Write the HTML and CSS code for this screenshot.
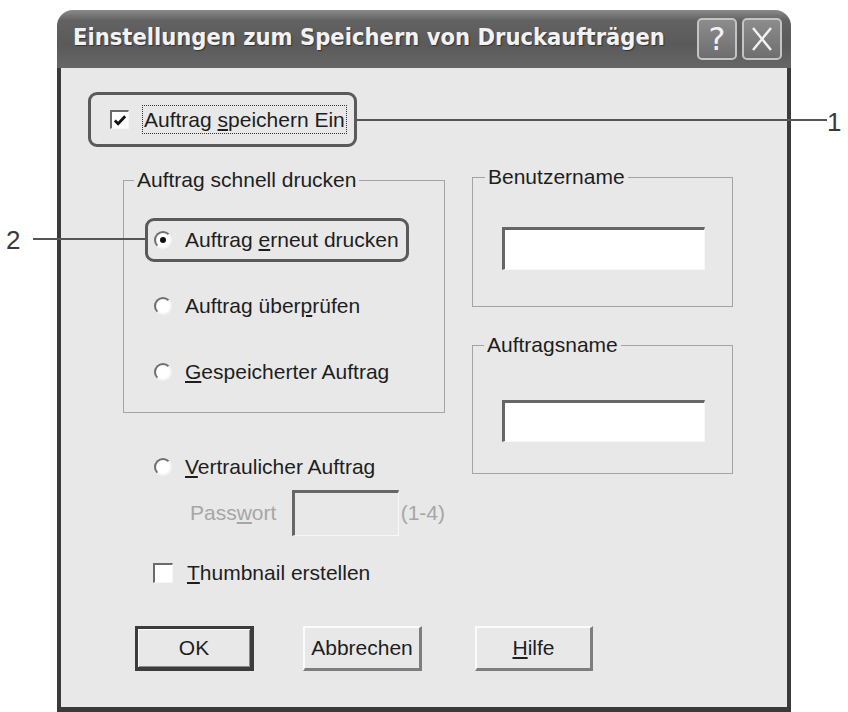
FILE: index.html
```html
<!DOCTYPE html>
<html lang="de">
<head>
<meta charset="utf-8">
<title>Einstellungen zum Speichern von Druckaufträgen</title>
<link rel="stylesheet" href="styles.css">
</head>
<body>
<div class="page">
  <div class="window">
    <div class="titlebar">
      <span class="title">Einstellungen zum Speichern von Druckaufträgen</span>
      <div class="tb-buttons">
        <span class="tb-btn tb-help">?</span>
        <span class="tb-btn tb-close"><svg width="30" height="30" viewBox="0 0 30 30"><path d="M6 4 L24 26 M24 4 L6 26" stroke="#f2f2f2" stroke-width="2.4" fill="none"/></svg></span>
      </div>
    </div>
    <div class="body">
      <div class="hl-check">
        <span class="checkbox"><svg width="17" height="17" viewBox="0 0 17 17"><path d="M3 8.5 L6.5 12 L14 4" stroke="#111" stroke-width="3" fill="none"/></svg></span>
        <span class="focus-label">Auftrag <u>s</u>peichern Ein</span>
      </div>
      <div class="main">
        <div class="col-left">
          <fieldset class="group group-quick">
            <legend>Auftrag schnell drucken</legend>
            <div class="opts">
              <div class="opt hl"><span class="radio checked"></span><span>Auftrag <u>e</u>rneut drucken</span></div>
              <div class="opt"><span class="radio"></span><span>Auftrag über<u>p</u>rüfen</span></div>
              <div class="opt"><span class="radio"></span><span><u>G</u>espeicherter Auftrag</span></div>
            </div>
          </fieldset>
          <div class="opt opt-conf"><span class="radio"></span><span><u>V</u>ertraulicher Auftrag</span></div>
          <div class="pw-row">
            <span class="disabled pw-label">Pass<u>w</u>ort</span>
            <span class="textbox pw-box"></span>
            <span class="disabled pw-range">(1-4)</span>
          </div>
          <div class="thumb-row">
            <span class="checkbox small"></span>
            <span><u>T</u>humbnail erstellen</span>
          </div>
        </div>
        <div class="col-right">
          <fieldset class="group group-user">
            <legend>Benutzername</legend>
            <div class="textbox user-box"></div>
          </fieldset>
          <fieldset class="group group-job">
            <legend>Auftragsname</legend>
            <div class="textbox job-box"></div>
          </fieldset>
        </div>
      </div>
      <div class="buttons">
        <span class="btn btn-default">OK</span>
        <span class="btn btn-cancel">Abbrechen</span>
        <span class="btn btn-help"><u>H</u>ilfe</span>
      </div>
    </div>
  </div>
  <div class="callout-line line1"></div>
  <span class="callout-num num1">1</span>
  <div class="callout-line line2"></div>
  <span class="callout-num num2">2</span>
</div>
</body>
</html>
```
FILE: styles.css
```css
html, body {
  margin: 0;
  padding: 0;
  background: #ffffff;
}

.page {
  position: relative;
  width: 848px;
  height: 712px;
  overflow: hidden;
  padding-top: 10px;
  box-sizing: border-box;
  font-family: "Liberation Sans", Arial, sans-serif;
  font-size: 21px;
  color: #1e1e1e;
}

.window {
  margin-left: 57px;
  width: 734px;
  height: 702px;
  display: flex;
  flex-direction: column;
}

.titlebar {
  height: 58px;
  flex: none;
  border-radius: 16px 16px 0 0;
  background: linear-gradient(#8a8a8a 0%, #626262 18%, #5a5a5a 60%, #666666 100%);
  display: flex;
  align-items: center;
  justify-content: space-between;
  padding: 0 9px 0 16px;
  box-sizing: border-box;
}

.title {
  font-family: "DejaVu Sans Condensed", "DejaVu Sans", sans-serif;
  font-stretch: condensed;
  font-weight: bold;
  font-size: 23.5px;
  color: #f2f2f2;
  text-shadow: 1px 1px 1px #333;
  padding-bottom: 4px;
  white-space: nowrap;
}

.tb-buttons {
  display: flex;
  gap: 5px;
}

.tb-btn {
  width: 40px;
  height: 42px;
  box-sizing: border-box;
  border: 2px solid #c4c4c4;
  border-radius: 5px;
  background: linear-gradient(#8c8c8c, #6e6e6e);
  display: flex;
  align-items: center;
  justify-content: center;
  color: #f2f2f2;
}

.tb-help {
  font-family: "DejaVu Sans", sans-serif;
  font-size: 32px;
  line-height: 1;
}

.body {
  flex: 1;
  background: #e8e8e8;
  border: 4px solid #3a3a3a;
  border-top: 0;
  border-bottom-width: 5px;
  padding-top: 24px;
}

.hl-check {
  margin-left: 27px;
  width: 269px;
  height: 55px;
  box-sizing: border-box;
  border: 3px solid #5a5a5a;
  border-radius: 9px;
  display: flex;
  align-items: center;
  padding-left: 19px;
  gap: 13px;
}

.checkbox {
  width: 19px;
  height: 19px;
  box-sizing: border-box;
  background: #ffffff;
  border-style: solid;
  border-width: 2px 1px 1px 2px;
  border-color: #6a6a6a #f6f6f6 #f6f6f6 #6a6a6a;
  display: flex;
  align-items: center;
  justify-content: center;
  flex: none;
}

.checkbox.small {
  width: 20px;
  height: 20px;
}

.focus-label {
  border: 1px dotted #333;
  padding: 1px 1px;
  line-height: 25px;
  white-space: nowrap;
}

.main {
  margin-top: 18px;
  margin-left: 62px;
  display: grid;
  grid-template-columns: 322px 261px;
  column-gap: 27px;
  align-items: start;
}

.col-left {
  padding-top: 3px;
  display: flex;
  flex-direction: column;
}

.group {
  margin: 0;
  padding: 0;
  border: 1px solid #a4a4a4;
  box-sizing: border-box;
  min-width: 0;
}

.group legend {
  padding: 0 3px;
  line-height: 24px;
  white-space: nowrap;
}

.group-quick {
  height: 245px;
}

.group-quick legend {
  margin-left: 10px;
}

.opts {
  margin-top: 26px;
  margin-left: 21px;
  display: flex;
  flex-direction: column;
  gap: 22px;
}

.opt {
  width: 264px;
  height: 44px;
  box-sizing: border-box;
  border: 3px solid transparent;
  border-radius: 9px;
  display: flex;
  align-items: center;
  padding-left: 6px;
  gap: 13px;
  white-space: nowrap;
}

.opt.hl {
  border-color: #5a5a5a;
}

.radio {
  width: 18px;
  height: 18px;
  box-sizing: border-box;
  border-radius: 50%;
  background: #ffffff;
  border: 2px solid;
  border-color: #6e6e6e #f4f4f4 #f4f4f4 #6e6e6e;
  display: flex;
  align-items: center;
  justify-content: center;
  flex: none;
}

.radio.checked::after {
  content: "";
  width: 6px;
  height: 6px;
  border-radius: 50%;
  background: #111;
}

.opt-conf {
  margin-top: 32px;
  margin-left: 22px;
}

.pw-row {
  margin-top: 1px;
  margin-left: 67px;
  height: 46px;
  display: flex;
  align-items: center;
  white-space: nowrap;
}

.disabled {
  color: #a6a6a6;
}

.pw-label {
  margin-right: 16px;
}

.textbox {
  box-sizing: border-box;
  background: #ffffff;
  border-style: solid;
  border-width: 3px 1px 1px 3px;
  border-color: #666666 #f8f8f8 #f8f8f8 #666666;
}

.pw-box {
  width: 111px;
  height: 46px;
  background: #e8e8e8;
  margin-right: 2px;
}

.thumb-row {
  margin-top: 17px;
  margin-left: 30px;
  height: 40px;
  display: flex;
  align-items: center;
  gap: 14px;
  white-space: nowrap;
}

.col-right {
  display: flex;
  flex-direction: column;
}

.group-user {
  height: 142px;
}

.group-user legend {
  margin-left: 12px;
}

.group-job {
  margin-top: 26px;
  height: 141px;
}

.group-job legend {
  margin-left: 11px;
}

.user-box {
  margin-top: 38px;
  margin-left: 29px;
  width: 203px;
  height: 43px;
}

.job-box {
  margin-top: 43px;
  margin-left: 29px;
  width: 203px;
  height: 42px;
}

.buttons {
  margin-top: 33px;
  margin-left: 74px;
  display: flex;
}

.btn {
  width: 119px;
  height: 45px;
  box-sizing: border-box;
  background: #e8e8e8;
  display: flex;
  align-items: center;
  justify-content: center;
  border-style: solid;
  border-width: 2px 3px 3px 2px;
  border-color: #fbfbfb #7e7e7e #7e7e7e #fbfbfb;
}

.btn-default {
  border-width: 3px 4px 4px 3px;
  border-color: #3c3c3c;
  box-shadow: inset 1px 1px 0 #fbfbfb, inset -1px -1px 0 #8a8a8a;
}

.btn-cancel {
  margin-left: 49px;
}

.btn-help {
  margin-left: 53px;
  width: 118px;
}

.callout-line {
  position: absolute;
  height: 2px;
  background: #555555;
}

.line1 {
  left: 357px;
  top: 119px;
  width: 470px;
}

.line2 {
  left: 33px;
  top: 238px;
  width: 112px;
}

.callout-num {
  position: absolute;
  font-size: 26px;
  line-height: 26px;
  color: #3a3a3a;
}

.num1 {
  left: 827px;
  top: 109px;
}

.num2 {
  left: 6px;
  top: 227px;
}
```
